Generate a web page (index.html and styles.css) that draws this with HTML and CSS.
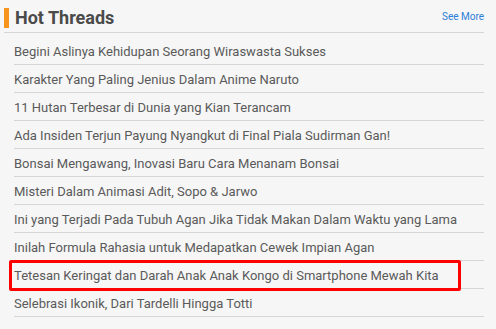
FILE: index.html
```html
<!DOCTYPE html>
<html lang="id">
<head>
  <meta charset="UTF-8" />
  <title>Hot Threads</title>
  <link rel="stylesheet" href="styles.css">
</head>
<body>
<div class="panel">
  <div class="panel-head">
    <h2>Hot Threads</h2>
    <a href="#" class="see-more">See More</a>
  </div>
  <ul class="threads">
    <li><a href="#">Begini Aslinya Kehidupan Seorang Wiraswasta Sukses</a></li>
    <li><a href="#">Karakter Yang Paling Jenius Dalam Anime Naruto</a></li>
    <li><a href="#">11 Hutan Terbesar di Dunia yang Kian Terancam</a></li>
    <li><a href="#">Ada Insiden Terjun Payung Nyangkut di Final Piala Sudirman Gan!</a></li>
    <li><a href="#">Bonsai Mengawang, Inovasi Baru Cara Menanam Bonsai</a></li>
    <li><a href="#">Misteri Dalam Animasi Adit, Sopo &amp; Jarwo</a></li>
    <li><a href="#">Ini yang Terjadi Pada Tubuh Agan Jika Tidak Makan Dalam Waktu yang Lama</a></li>
    <li><a href="#">Inilah Formula Rahasia untuk Medapatkan Cewek Impian Agan</a></li>
    <li class="marked"><a href="#">Tetesan Keringat dan Darah Anak Anak Kongo di Smartphone Mewah Kita</a></li>
    <li><a href="#">Selebrasi Ikonik, Dari Tardelli Hingga Totti</a></li>
  </ul>
</div>
</body>
</html>
```

FILE: styles.css
```css
body {
  margin: 0;
  background: #f6f6f6;
  font-family: Roboto, "Liberation Sans", sans-serif;
}
.panel {
  padding: 8px 12px 0 4px;
}
.panel-head {
  display: flex;
  align-items: flex-end;
  justify-content: space-between;
  border-bottom: 1px solid #d6d6d6;
  padding-bottom: 4px;
}
.panel-head h2 {
  margin: 0;
  padding-left: 6px;
  border-left: 5px solid #f7941d;
  font-size: 18px;
  line-height: 20px;
  font-weight: bold;
  color: #4a4a4a;
}
.see-more {
  font-size: 10px;
  color: #2b7ed6;
  text-decoration: none;
  line-height: 12px;
  margin-bottom: 5px;
}
.threads {
  list-style: none;
  margin: 4px 0 0 10px;
  padding: 0;
}
.threads li {
  position: relative;
  height: 27px;
  line-height: 27px;
  border-bottom: 1px solid #d6d6d6;
}
.threads a {
  font-size: 13px;
  color: #5a5a5a;
  text-decoration: none;
}
/* red box drawn round the highlighted thread */
.threads li.marked::after {
  content: "";
  position: absolute;
  left: -5px;
  top: -1px;
  width: 446px;
  height: 25px;
  border: 3px solid #f00;
  border-radius: 2px;
}
```
